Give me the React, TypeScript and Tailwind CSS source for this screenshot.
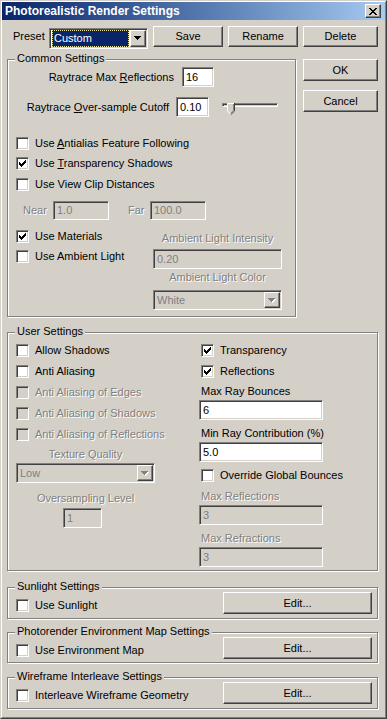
import React from 'react';

// classic 3D edges
const raised =
  'bg-[#D4D0C8] border border-t-white border-l-white border-r-[#404040] border-b-[#404040] shadow-[inset_-1px_-1px_0_#808080]';
const sunken =
  'border border-t-[#808080] border-l-[#808080] border-r-white border-b-white shadow-[inset_1px_1px_0_#404040,inset_-1px_-1px_0_#D4D0C8]';
const grayText = 'text-[#808080] [text-shadow:1px_1px_0_#fff]';

const ARROW = 'M0 0h7v1h-1v1h-1v1h-1v1h-1v-1h-1v-1h-1v-1h-1z';

function CheckBox({ checked, disabled }: { checked?: boolean; disabled?: boolean }) {
  return (
    <span
      className={`w-[13px] h-[13px] shrink-0 flex items-center justify-center ${sunken} ${
        disabled ? 'bg-[#D4D0C8]' : 'bg-white'
      }`}
    >
      {checked && (
        <svg width="7" height="7" viewBox="0 0 7 7" shapeRendering="crispEdges" fill={disabled ? '#808080' : '#000'}>
          <rect x="0" y="2" width="1" height="3" />
          <rect x="1" y="3" width="1" height="3" />
          <rect x="2" y="4" width="1" height="3" />
          <rect x="3" y="3" width="1" height="3" />
          <rect x="4" y="2" width="1" height="3" />
          <rect x="5" y="1" width="1" height="3" />
          <rect x="6" y="0" width="1" height="3" />
        </svg>
      )}
    </span>
  );
}

function Check({
  label,
  checked,
  disabled,
  className = '',
}: {
  label: React.ReactNode;
  checked?: boolean;
  disabled?: boolean;
  className?: string;
}) {
  return (
    <div className={`flex items-center ${className}`}>
      <CheckBox checked={checked} disabled={disabled} />
      <span className={`ml-[6px] whitespace-nowrap ${disabled ? grayText : ''}`}>{label}</span>
    </div>
  );
}

function Field({ value, disabled, className = '' }: { value: string; disabled?: boolean; className?: string }) {
  return (
    <div
      className={`${sunken} ${
        disabled ? 'bg-[#D4D0C8] text-[#808080]' : 'bg-white'
      } flex items-center pl-[3px] ${className}`}
    >
      {value}
    </div>
  );
}

function Combo({
  value,
  disabled,
  selected,
  className = '',
}: {
  value: string;
  disabled?: boolean;
  selected?: boolean;
  className?: string;
}) {
  return (
    <div className={`${sunken} ${disabled ? 'bg-[#D4D0C8]' : 'bg-white'} flex p-[1px] ${className}`}>
      <div
        className={`flex-1 flex items-center pl-[2px] mr-[1px] ${
          selected
            ? 'bg-[#0A246A] text-white ml-[1px] outline-1 outline-dotted outline-[#E8E4A0] -outline-offset-1'
            : disabled
            ? 'text-[#808080]'
            : ''
        }`}
      >
        {value}
      </div>
      <div className={`${raised} w-[16px] flex items-center justify-center`}>
        <svg width="8" height="5" viewBox="0 0 8 5" shapeRendering="crispEdges">
          {disabled && <path d={ARROW} fill="#fff" transform="translate(1 1)" />}
          <path d={ARROW} fill={disabled ? '#808080' : '#000'} />
        </svg>
      </div>
    </div>
  );
}

function Button({ children, className = '' }: { children: React.ReactNode; className?: string }) {
  return <div className={`${raised} flex items-center justify-center ${className}`}>{children}</div>;
}

function Group({ title, className = '', children }: { title: string; className?: string; children?: React.ReactNode }) {
  return (
    <div className={`relative border border-[#808080] shadow-[1px_1px_0_#fff,inset_1px_1px_0_#fff] ${className}`}>
      <span className="absolute left-[7px] top-[-8px] px-[2px] bg-[#D4D0C8] leading-[13px] whitespace-nowrap">
        {title}
      </span>
      {children}
    </div>
  );
}

function Label({ children, disabled, className = '' }: { children: React.ReactNode; disabled?: boolean; className?: string }) {
  return (
    <div className={`h-[14px] flex items-center whitespace-nowrap ${disabled ? grayText : ''} ${className}`}>
      {children}
    </div>
  );
}

function U({ children }: { children: string }) {
  return <span className="underline underline-offset-[1px]">{children}</span>;
}

function Slider() {
  return (
    <div className="relative w-[56px] h-[12px] self-start mt-[1px]">
      <div className={`mt-[3px] h-[4px] w-full ${sunken}`} />
      <svg className="absolute left-[5px] top-0" width="8" height="12" viewBox="0 0 8 12">
        <polygon points="0,0 7,0 7,8 3.5,11.5 0,8" fill="#D4D0C8" />
        <polyline points="0.5,8 0.5,0.5 7,0.5" fill="none" stroke="#fff" />
        <polyline points="7.5,0 7.5,8 3.8,11.7" fill="none" stroke="#404040" />
        <polyline points="6.5,1 6.5,7.6 3.6,10.6" fill="none" stroke="#808080" />
        <line x1="0.5" y1="8" x2="3.5" y2="11.2" stroke="#fff" />
      </svg>
    </div>
  );
}

export default function App() {
  return (
    <div className="w-[387px] h-[719px] bg-[#D4D0C8] border border-t-[#D4D0C8] border-l-[#D4D0C8] border-r-[#404040] border-b-[#404040] font-['Liberation_Sans',Arial,sans-serif] text-[11px] leading-[13px] text-black overflow-hidden">
      <div className="h-full border border-t-white border-l-white border-r-[#808080] border-b-[#808080]">
        {/* Title bar */}
        <div className="h-[18px] bg-linear-to-r from-[#0A246A] to-[#A6CAF0] flex items-center pl-[3px] pr-[4px]">
          <span className="text-white font-bold text-[12px] leading-[14px]">Photorealistic Render Settings</span>
          <div className={`ml-auto w-[16px] h-[14px] ${raised} flex items-center justify-center`}>
            <svg width="8" height="7" viewBox="0 0 8 7" shapeRendering="crispEdges" fill="#000">
              <rect x="0" y="0" width="2" height="1" />
              <rect x="6" y="0" width="2" height="1" />
              <rect x="1" y="1" width="2" height="1" />
              <rect x="5" y="1" width="2" height="1" />
              <rect x="2" y="2" width="4" height="1" />
              <rect x="3" y="3" width="2" height="1" />
              <rect x="2" y="4" width="4" height="1" />
              <rect x="1" y="5" width="2" height="1" />
              <rect x="5" y="5" width="2" height="1" />
              <rect x="0" y="6" width="2" height="1" />
              <rect x="6" y="6" width="2" height="1" />
            </svg>
          </div>
        </div>

        {/* Preset row */}
        <div className="flex items-center mt-[6px] h-[21px]">
          <span className="ml-[11px] w-[36px]">Preset</span>
          <Combo value="Custom" selected className="w-[99px] h-[21px] mt-[3px]" />
          <Button className="ml-[5px] w-[70px] h-[21px]">Save</Button>
          <Button className="ml-[5px] w-[70px] h-[21px]">Rename</Button>
          <Button className="ml-[5px] w-[75px] h-[21px]">Delete</Button>
        </div>

        {/* Common settings + OK / Cancel */}
        <div className="flex mt-[12px] ml-[5px]">
          <Group title="Common Settings" className="w-[289px] h-[258px]">
            <div className="flex items-center mt-[7px]">
              <span className="w-[166px] text-right">
                Raytrace Max <U>R</U>eflections
              </span>
              <Field value="16" className="ml-[8px] w-[32px] h-[20px]" />
            </div>
            <div className="flex items-center mt-[10px]">
              <span className="w-[161px] text-right">
                Raytrace <U>O</U>ver-sample Cutoff
              </span>
              <Field value="0.10" className="ml-[7px] w-[33px] h-[20px]" />
              <div className="ml-[13px]">
                <Slider />
              </div>
            </div>
            <Check
              className="h-[20px] mt-[16px] pl-[8px]"
              label={
                <>
                  Use <U>A</U>ntialias Feature Following
                </>
              }
            />
            <Check
              className="h-[20px] pl-[8px]"
              checked
              label={
                <>
                  Use <U>T</U>ransparency Shadows
                </>
              }
            />
            <Check className="h-[20px] mt-[1px] pl-[8px]" label="Use View Clip Distances" />
            <div className="flex items-center mt-[7px] h-[19px]">
              <span className={`ml-[15px] w-[30px] ${grayText}`}>Near</span>
              <Field value="1.0" disabled className="w-[56px] h-[19px]" />
              <span className={`ml-[19px] w-[22px] ${grayText}`}>Far</span>
              <Field value="100.0" disabled className="w-[56px] h-[19px]" />
            </div>
            <div className="flex mt-[6px]">
              <div className="w-[145px] pl-[8px]">
                <Check className="h-[20px]" checked label="Use Materials" />
                <Check className="h-[21px]" label="Use Ambient Light" />
              </div>
              <div className="w-[129px] flex flex-col">
                <Label disabled className="mt-[5px] justify-center">
                  Ambient Light Intensity
                </Label>
                <Field value="0.20" disabled className="mt-[4px] h-[20px]" />
                <Label disabled className="mt-[1px] justify-center">
                  Ambient Light Color
                </Label>
                <Combo value="White" disabled className="mt-[6px] h-[20px]" />
              </div>
            </div>
          </Group>
          <div className="ml-[7px] flex flex-col">
            <Button className="w-[75px] h-[22px]">OK</Button>
            <Button className="w-[75px] h-[22px] mt-[9px]">Cancel</Button>
          </div>
        </div>

        {/* User settings */}
        <Group title="User Settings" className="mt-[15px] ml-[5px] w-[371px] h-[239px]">
          <div className="flex">
            <div className="ml-[8px] w-[139px] pt-[7px] flex flex-col">
              <Check className="h-[21px]" label="Allow Shadows" />
              <Check className="h-[21px]" label="Anti Aliasing" />
              <Check className="h-[21px]" disabled label="Anti Aliasing of Edges" />
              <Check className="h-[21px]" disabled label="Anti Aliasing of Shadows" />
              <Check className="h-[21px]" disabled label="Anti Aliasing of Reflections" />
              <Label disabled className="mt-[2px] justify-center">
                Texture Quality
              </Label>
              <Combo value="Low" disabled className="mt-[2px] h-[20px]" />
              <Label disabled className="mt-[8px] justify-center">
                Oversampling Level
              </Label>
              <Field value="1" disabled className="mt-[3px] ml-[47px] w-[39px] h-[20px]" />
            </div>
            <div className="ml-[44px] w-[124px] pt-[7px] flex flex-col">
              <Check className="h-[21px] pl-[2px]" checked label="Transparency" />
              <Check className="h-[21px] pl-[2px]" checked label="Reflections" />
              <Label className="mt-[2px] pl-[2px]">Max Ray Bounces</Label>
              <Field value="6" className="mt-[2px] h-[20px]" />
              <Label className="mt-[6px] pl-[2px]">Min Ray Contribution (%)</Label>
              <Field value="5.0" className="mt-[2px] h-[20px]" />
              <Check className="h-[21px] pl-[2px] mt-[3px]" label="Override Global Bounces" />
              <Label disabled className="mt-[3px] pl-[2px]">
                Max Reflections
              </Label>
              <Field value="3" disabled className="mt-[2px] h-[20px]" />
              <Label disabled className="mt-[6px] pl-[2px]">
                Max Refractions
              </Label>
              <Field value="3" disabled className="mt-[2px] h-[20px]" />
            </div>
          </div>
        </Group>

        {/* Sunlight */}
        <Group title="Sunlight Settings" className="mt-[16px] ml-[5px] w-[371px] h-[32px]">
          <div className="flex items-start">
            <Check className="mt-[11px] pl-[8px]" label="Use Sunlight" />
            <Button className="ml-auto mr-[5px] mt-[4px] w-[149px] h-[22px]">Edit...</Button>
          </div>
        </Group>

        {/* Environment map */}
        <Group title="Photorender Environment Map Settings" className="mt-[13px] ml-[5px] w-[371px] h-[31px]">
          <div className="flex items-start">
            <Check className="mt-[11px] pl-[8px]" label="Use Environment Map" />
            <Button className="ml-auto mr-[5px] mt-[4px] w-[149px] h-[22px]">Edit...</Button>
          </div>
        </Group>

        {/* Wireframe interleave */}
        <Group title="Wireframe Interleave Settings" className="mt-[14px] ml-[5px] w-[371px] h-[32px]">
          <div className="flex items-start">
            <Check className="mt-[11px] pl-[8px]" label="Interleave Wireframe Geometry" />
            <Button className="ml-auto mr-[5px] mt-[4px] w-[149px] h-[22px]">Edit...</Button>
          </div>
        </Group>
      </div>
    </div>
  );
}
